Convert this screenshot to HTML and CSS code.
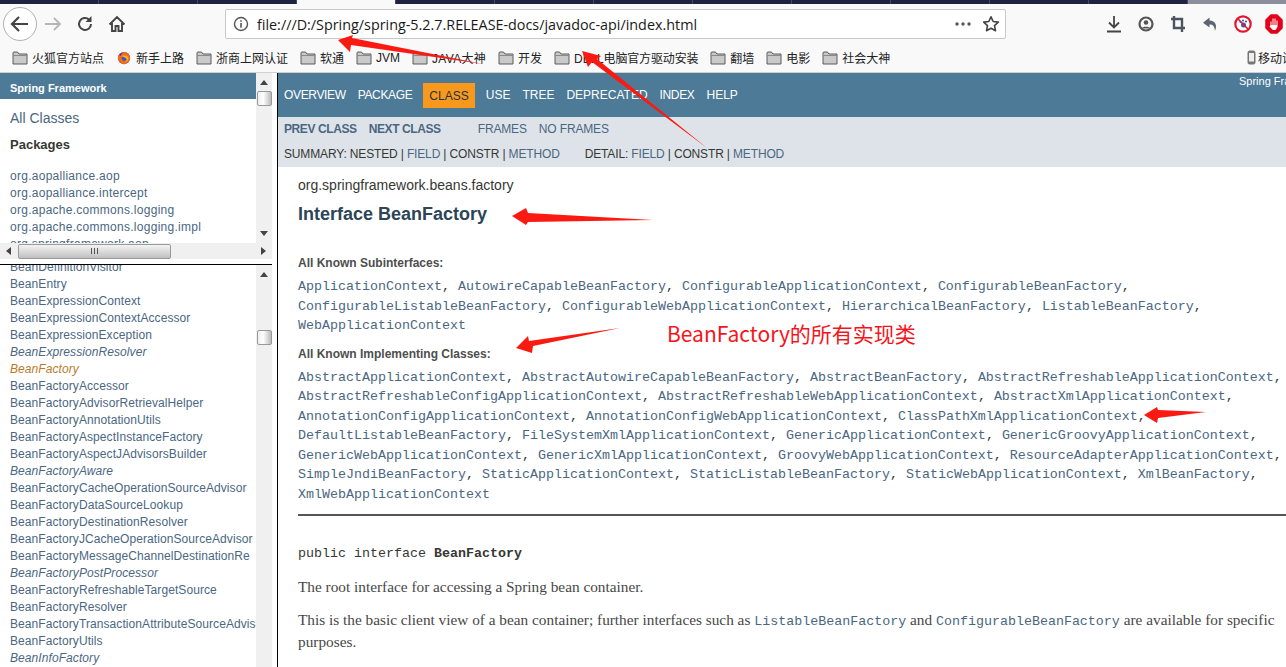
FILE: index.html
```html
<!DOCTYPE html>
<html lang="zh">
<head>
<meta charset="utf-8">
<title>BeanFactory</title>
<link rel="stylesheet" href="styles.css">
</head>
<body>
<div class="tabstrip">
  <i class="tab"></i><i class="tab"></i><i class="tab"></i><i class="tab active"></i><i class="tab"></i><i class="tab"></i><i class="tab"></i><i class="tab"></i><i class="tab"></i><i class="tab"></i><i class="tab"></i><i class="tab"></i><i class="tab last"></i>
</div>
<header class="toolbar">
  <div class="nav-buttons">
    <span class="btn-back"><svg width="22" height="22" viewBox="0 0 22 22"><path d="M19 11H4M10 4l-7 7 7 7" fill="none" stroke="#444" stroke-width="2.2"/></svg></span>
    <span class="btn"><svg width="18" height="18" viewBox="0 0 18 18"><path d="M1 9h15M10 3l6 6-6 6" fill="none" stroke="#b5b5b5" stroke-width="1.8"/></svg></span>
    <span class="btn"><svg width="18" height="18" viewBox="0 0 18 18"><path d="M15 9a6 6 0 1 1-2-4.500" fill="none" stroke="#444" stroke-width="2"/><path d="M15.500 1v6h-6z" fill="#444"/></svg></span>
    <span class="btn"><svg width="18" height="18" viewBox="0 0 18 18"><path d="M1.500 9.500 9 2l7.500 7.500M4 8v8h3.500v-5h3v5H14V8" fill="none" stroke="#444" stroke-width="1.900"/></svg></span>
  </div>
  <div class="urlbar">
    <svg class="info" width="16" height="16" viewBox="0 0 16 16"><circle cx="8" cy="8" r="6.500" fill="none" stroke="#555" stroke-width="1.400"/><path d="M7.200 7h1.600v4.800H7.200zM7.200 4.200h1.600v1.600H7.200z" fill="#555"/></svg>
    <span class="url">file:///D:/Spring/spring-5.2.7.RELEASE-docs/javadoc-api/index.html</span>
    <svg class="more" width="18" height="6" viewBox="0 0 18 6"><circle cx="3" cy="3" r="1.700" fill="#555"/><circle cx="9" cy="3" r="1.700" fill="#555"/><circle cx="15" cy="3" r="1.700" fill="#555"/></svg>
    <svg class="star" width="18" height="18" viewBox="0 0 18 18"><path d="M9 1.800l2.200 4.700 5.100.6-3.800 3.500 1 5.100L9 13.200l-4.500 2.500 1-5.100-3.800-3.500 5.100-.6z" fill="none" stroke="#444" stroke-width="1.600" stroke-linejoin="round"/></svg>
  </div>
  <div class="tools">
    <svg width="16" height="18" viewBox="0 0 16 18"><path d="M8 1v11M3 7.500l5 5 5-5M1 16.500h14" fill="none" stroke="#444" stroke-width="1.800"/></svg>
    <svg width="16" height="16" viewBox="0 0 16 16"><circle cx="8" cy="8" r="6.500" fill="none" stroke="#555" stroke-width="2.200"/><circle cx="8" cy="6.500" r="2.300" fill="#555"/><path d="M3.500 12.500c1-2.500 8-2.500 9 0z" fill="#555"/></svg>
    <svg width="16" height="18" viewBox="0 0 16 18"><path d="M4 1v12h11M1 4h11v13" fill="none" stroke="#4a5560" stroke-width="2.400"/></svg>
    <svg width="16" height="16" viewBox="0 0 16 16"><path d="M7.500 1.500L1 6.800l6.500 4.700V8.500c3 0 5 1 5.500 6.500 2.500-6 .5-10-5.500-10.500z" fill="#5b6670"/></svg>
    <svg width="18" height="18" viewBox="0 0 18 18"><circle cx="9" cy="9" r="7.700" fill="#fff" stroke="#e0182d" stroke-width="2.200"/><circle cx="9.500" cy="10" r="2.500" fill="#2f5fc4"/><circle cx="6.500" cy="7" r="1.100" fill="#2f5fc4"/><circle cx="9" cy="5.500" r="1.100" fill="#2f5fc4"/><circle cx="12" cy="6.500" r="1.100" fill="#2f5fc4"/><path d="M3.800 3.800l10.400 10.400" stroke="#e0182d" stroke-width="1.600"/></svg>
    <svg class="stop" width="18" height="20" viewBox="0 0 18 20"><path d="M6 1h6l5 5v8l-5 5H6l-5-5V6z" fill="#e2001a" stroke="#e2001a" stroke-linejoin="round" stroke-width="1.500"/><path d="M5.500 11V7.500h1V11h1V4.500h1V11h1V4.500h1V11h1V6.500h1V13l-2 3H8l-3.500-3.500z" fill="#fff"/></svg>
  </div>
</header>
<nav class="bookmarks">
  <span class="bm"><svg class="folder" viewBox="0 0 16 14"><path d="M1 13V2q0-1 1-1h3.500l1.500 2h8v10z" fill="#c9c9c9" stroke="#5c5c5c"/><path d="M1 4.500h14" stroke="#8a8a8a"/></svg>火狐官方站点</span>
  <span class="bm"><svg class="folder" viewBox="0 0 16 16"><circle cx="8" cy="8" r="7" fill="#5b2a9c"/><path d="M8 1a7 7 0 1 1-7 7c0-2 .7-3 1.500-4 .3 1 .8 1.500 1.500 1.700C5 3 6.500 1.500 8 1z" fill="#f26a1b"/><circle cx="8.500" cy="8" r="3" fill="#3458c4"/><path d="M5 6c3-2 7-1 8 2 0 3-2 5-4 5 2-1 2.500-3 1.500-4.500C9 7 7 7 5 6z" fill="#f9b21a"/></svg>新手上路</span>
  <span class="bm"><svg class="folder" viewBox="0 0 16 14"><path d="M1 13V2q0-1 1-1h3.500l1.500 2h8v10z" fill="#c9c9c9" stroke="#5c5c5c"/><path d="M1 4.500h14" stroke="#8a8a8a"/></svg>浙商上网认证</span>
  <span class="bm"><svg class="folder" viewBox="0 0 16 14"><path d="M1 13V2q0-1 1-1h3.500l1.500 2h8v10z" fill="#c9c9c9" stroke="#5c5c5c"/><path d="M1 4.500h14" stroke="#8a8a8a"/></svg>软通</span>
  <span class="bm"><svg class="folder" viewBox="0 0 16 14"><path d="M1 13V2q0-1 1-1h3.500l1.500 2h8v10z" fill="#c9c9c9" stroke="#5c5c5c"/><path d="M1 4.500h14" stroke="#8a8a8a"/></svg>JVM</span>
  <span class="bm bm-wide"><svg class="folder" viewBox="0 0 16 14"><path d="M1 13V2q0-1 1-1h3.500l1.500 2h8v10z" fill="#c9c9c9" stroke="#5c5c5c"/><path d="M1 4.500h14" stroke="#8a8a8a"/></svg>JAVA大神</span>
  <span class="bm"><svg class="folder" viewBox="0 0 16 14"><path d="M1 13V2q0-1 1-1h3.500l1.500 2h8v10z" fill="#c9c9c9" stroke="#5c5c5c"/><path d="M1 4.500h14" stroke="#8a8a8a"/></svg>开发</span>
  <span class="bm bm-narrow"><svg class="folder" viewBox="0 0 16 14"><path d="M1 13V2q0-1 1-1h3.500l1.500 2h8v10z" fill="#c9c9c9" stroke="#5c5c5c"/><path d="M1 4.500h14" stroke="#8a8a8a"/></svg>DELL电脑官方驱动安装</span>
  <span class="bm"><svg class="folder" viewBox="0 0 16 14"><path d="M1 13V2q0-1 1-1h3.500l1.500 2h8v10z" fill="#c9c9c9" stroke="#5c5c5c"/><path d="M1 4.500h14" stroke="#8a8a8a"/></svg>翻墙</span>
  <span class="bm"><svg class="folder" viewBox="0 0 16 14"><path d="M1 13V2q0-1 1-1h3.500l1.500 2h8v10z" fill="#c9c9c9" stroke="#5c5c5c"/><path d="M1 4.500h14" stroke="#8a8a8a"/></svg>电影</span>
  <span class="bm"><svg class="folder" viewBox="0 0 16 14"><path d="M1 13V2q0-1 1-1h3.500l1.500 2h8v10z" fill="#c9c9c9" stroke="#5c5c5c"/><path d="M1 4.500h14" stroke="#8a8a8a"/></svg>社会大神</span>
  <span class="bm mobile"><svg class="phone" viewBox="0 0 9 15"><rect x="1" y="1" width="7" height="13" rx="1.500" fill="#777" stroke="#777"/><path d="M2 3h5v8.500H2z" fill="#eee"/></svg>移动设备</span>
</nav>
<main class="frames">
  <aside class="side">
    <section class="side-top">
      <div class="side-row">
        <div class="side-pane">
          <div class="brand">Spring Framework</div>
          <a class="all">All Classes</a>
          <h2 class="pk-title">Packages</h2>
          <ul class="pk-list">
            <li>org.aopalliance.aop</li>
            <li>org.aopalliance.intercept</li>
            <li>org.apache.commons.logging</li>
            <li>org.apache.commons.logging.impl</li>
            <li>org.springframework.aop</li>
          </ul>
        </div>
        <div class="vscroll">
          <svg class="arrow" viewBox="0 0 8 5"><path d="M4 0l4 5H0z" fill="#444"/></svg>
          <span class="thumb thumb-top"></span>
          <svg class="arrow arrow-end" viewBox="0 0 8 5"><path d="M4 5L8 0H0z" fill="#444"/></svg>
        </div>
      </div>
      <div class="hscroll">
        <svg class="arrow-h" viewBox="0 0 5 8"><path d="M0 4l5-4v8z" fill="#444"/></svg>
        <span class="hthumb"><i></i></span>
        <svg class="arrow-h arrow-end-h" viewBox="0 0 5 8"><path d="M5 4L0 0v8z" fill="#444"/></svg>
      </div>
    </section>
    <section class="side-bottom">
      <ul class="class-list">
        <li class="first">BeanDefinitionVisitor</li>
        <li>BeanEntry</li>
        <li>BeanExpressionContext</li>
        <li>BeanExpressionContextAccessor</li>
        <li>BeanExpressionException</li>
        <li class="it">BeanExpressionResolver</li>
        <li class="it cur">BeanFactory</li>
        <li>BeanFactoryAccessor</li>
        <li>BeanFactoryAdvisorRetrievalHelper</li>
        <li>BeanFactoryAnnotationUtils</li>
        <li>BeanFactoryAspectInstanceFactory</li>
        <li>BeanFactoryAspectJAdvisorsBuilder</li>
        <li class="it">BeanFactoryAware</li>
        <li>BeanFactoryCacheOperationSourceAdvisor</li>
        <li>BeanFactoryDataSourceLookup</li>
        <li>BeanFactoryDestinationResolver</li>
        <li>BeanFactoryJCacheOperationSourceAdvisor</li>
        <li>BeanFactoryMessageChannelDestinationRe</li>
        <li class="it">BeanFactoryPostProcessor</li>
        <li>BeanFactoryRefreshableTargetSource</li>
        <li>BeanFactoryResolver</li>
        <li>BeanFactoryTransactionAttributeSourceAdvis</li>
        <li>BeanFactoryUtils</li>
        <li class="it">BeanInfoFactory</li>
      </ul>
      <div class="vscroll">
        <svg class="arrow arrow-low" viewBox="0 0 8 5"><path d="M4 0l4 5H0z" fill="#444"/></svg>
        <span class="thumb thumb-low"></span>
      </div>
    </section>
  </aside>
  <article class="content">
    <div class="topnav">
      <a class="snug">OVERVIEW</a><a class="snug">PACKAGE</a><a class="on">CLASS</a><a>USE</a><a>TREE</a><a>DEPRECATED</a><a class="snug">INDEX</a><a>HELP</a>
      <span class="about">Spring Framework</span>
    </div>
    <div class="subnav">
      <div class="subrow">
        <a class="b">PREV CLASS</a><a class="b">NEXT CLASS</a><a class="frames-link">FRAMES</a><a>NO FRAMES</a>
      </div>
      <div class="subrow tight">
        <span>SUMMARY: NESTED | <a>FIELD</a> | CONSTR | <a>METHOD</a></span>
        <span class="detail">DETAIL: <a>FIELD</a> | CONSTR | <a>METHOD</a></span>
      </div>
    </div>
    <div class="body">
      <div class="pkg">org.springframework.beans.factory</div>
      <h1 class="title">Interface BeanFactory</h1>
      <h3 class="label label-sub">All Known Subinterfaces:</h3>
      <div class="mono">
        <div><a>ApplicationContext</a>, <a>AutowireCapableBeanFactory</a>, <a>ConfigurableApplicationContext</a>, <a>ConfigurableBeanFactory</a>,</div>
        <div><a>ConfigurableListableBeanFactory</a>, <a>ConfigurableWebApplicationContext</a>, <a>HierarchicalBeanFactory</a>, <a>ListableBeanFactory</a>,</div>
        <div><a>WebApplicationContext</a></div>
      </div>
      <h3 class="label label-impl">All Known Implementing Classes:</h3>
      <div class="mono">
        <div><a>AbstractApplicationContext</a>, <a>AbstractAutowireCapableBeanFactory</a>, <a>AbstractBeanFactory</a>, <a>AbstractRefreshableApplicationContext</a>,</div>
        <div><a>AbstractRefreshableConfigApplicationContext</a>, <a>AbstractRefreshableWebApplicationContext</a>, <a>AbstractXmlApplicationContext</a>,</div>
        <div><a>AnnotationConfigApplicationContext</a>, <a>AnnotationConfigWebApplicationContext</a>, <a>ClassPathXmlApplicationContext</a>,</div>
        <div><a>DefaultListableBeanFactory</a>, <a>FileSystemXmlApplicationContext</a>, <a>GenericApplicationContext</a>, <a>GenericGroovyApplicationContext</a>,</div>
        <div><a>GenericWebApplicationContext</a>, <a>GenericXmlApplicationContext</a>, <a>GroovyWebApplicationContext</a>, <a>ResourceAdapterApplicationContext</a>,</div>
        <div><a>SimpleJndiBeanFactory</a>, <a>StaticApplicationContext</a>, <a>StaticListableBeanFactory</a>, <a>StaticWebApplicationContext</a>, <a>XmlBeanFactory</a>,</div>
        <div><a>XmlWebApplicationContext</a></div>
      </div>
      <hr class="rule">
      <pre class="sig">public interface <b>BeanFactory</b></pre>
      <p class="para first-para">The root interface for accessing a Spring bean container.</p>
      <p class="para">This is the basic client view of a bean container; further interfaces such as <code>ListableBeanFactory</code> and <code>ConfigurableBeanFactory</code> are available for specific<br>purposes.</p>
    </div>
  </article>
</main>
<div class="note">BeanFactory的所有实现类</div>
<svg class="arrows" width="1286" height="667" viewBox="0 0 1286 667">
  <g fill="#fb1a12">
    <path d="M338 40L353 35L352 38L483 64L351 45L350 52z"/>
    <path d="M582 51L601 56L597 59L707 148L592 62L588 67z"/>
    <path d="M512 216L526 208L528 213L653 220L528 222L526 225z"/>
    <path d="M516 348L528 336L529 341L620 328L533 346L532 353z"/>
    <path d="M1144 415L1157 407L1158 410L1206 412L1158 418L1157 423z"/>
  </g>
</svg>
</body>
</html>
```

FILE: styles.css
```css
* { box-sizing: border-box; }
html, body { margin: 0; height: 667px; overflow: hidden; background: #fff; }
body { display: flex; flex-direction: column; width: 1286px; position: relative; font-family: "Liberation Sans", "Noto Sans CJK SC", sans-serif; }
a { color: inherit; text-decoration: none; }

.tabstrip { display: flex; gap: 1px; height: 4px; background: #444a66; flex: none; }
.tab { display: block; flex: none; width: 98px; background: #1e2342; }
.tab.active { background: #f9f9fa; }
.tab.last { flex: 1; background: #8c8f9b; }

.toolbar { display: flex; align-items: center; height: 44px; flex: none; background: #f9f9fa; padding: 0 0 4px 3px; }
.nav-buttons { display: flex; align-items: center; width: 222px; flex: none; }
.btn-back { display: flex; align-items: center; justify-content: center; width: 34px; height: 34px; border: 1px solid #b1b1b3; border-radius: 50%; background: #fff; }
.btn { display: flex; align-items: center; justify-content: center; width: 32px; }
.urlbar { display: flex; align-items: center; width: 781px; height: 30px; flex: none; background: #fff; border: 1px solid #c8c8ca; border-radius: 2px; padding: 0 5px 0 7px; }
.url { margin-left: 8px; font-family: "Open Sans", "Noto Sans", sans-serif; font-size: 14.35px; color: #1a1a1a; white-space: nowrap; flex: 1; }
.more { margin-right: 10px; }
.tools { display: flex; align-items: center; gap: 16px; margin-left: 100px; flex: none; }
.stop { margin-left: -3px; }

.bookmarks { display: flex; align-items: center; gap: 12px; height: 25px; flex: none; padding: 0 0 5px 12px; background: #f9f9fa; border-bottom: 1px solid #d0d0d2; font-size: 12px; color: #222; white-space: nowrap; }
.bm { display: flex; align-items: center; gap: 4px; }
.bm-wide { letter-spacing: 0.3px; }
.bm-narrow { letter-spacing: -0.15px; }
.folder { width: 16px; height: 14px; }
.phone { width: 9px; height: 15px; }
.mobile { gap: 2px; margin-left: auto; margin-right: -20px; }

.frames { display: flex; flex: 1; min-height: 0; }
.side { width: 277px; flex: none; display: flex; flex-direction: column; background: #fff; }
.side-top { height: 192px; flex: none; width: 272px; border-bottom: 1px solid #000; padding-bottom: 5px; display: flex; flex-direction: column; }
.side-row { display: flex; height: 170px; flex: none; }
.side-pane { flex: 1; min-width: 0; overflow: hidden; color: #4a6782; }
.brand { height: 26px; line-height: 30px; padding-left: 10px; background: #4d7a97; color: #fff; font-size: 11px; font-weight: bold; }
.all { display: block; margin: 10px 0 0 10px; font-size: 14px; line-height: 18px; }
.pk-title { margin: 9px 0 0 10px; font-size: 13px; line-height: 18px; color: #353833; }
.pk-list { list-style: none; margin: 14px 0 0 10px; padding: 0; font-size: 12px; line-height: 17px; letter-spacing: 0.27px; }

.vscroll { width: 16px; flex: none; background: #f0f0f0; display: flex; flex-direction: column; align-items: center; }
.arrow { width: 8px; height: 5px; margin-top: 7px; flex: none; }
.arrow-end { margin-top: auto; margin-bottom: 7px; }
.arrow-low { margin-top: 7px; }
.thumb { display: block; width: 15px; height: 15px; border: 1px solid #999; border-radius: 2px; background: linear-gradient(90deg, #eee, #fff 40%, #bbb); flex: none; }
.thumb-top { margin-top: 6px; }
.thumb-low { margin-top: 53px; }

.hscroll { display: flex; align-items: center; height: 16px; flex: none; background: #f0f0f0; }
.arrow-h { width: 5px; height: 8px; margin-left: 6px; flex: none; }
.arrow-end-h { margin-left: auto; margin-right: 6px; }
.hthumb { display: flex; align-items: center; justify-content: center; width: 153px; height: 15px; margin-left: 7px; border: 1px solid #999; border-radius: 2px; background: linear-gradient(180deg, #f4f4f4, #c0c0c0); }
.hthumb i { display: block; width: 7px; height: 6px; background: repeating-linear-gradient(90deg, #555 0 1px, transparent 1px 3px); }

.side-bottom { flex: 1; min-height: 0; width: 272px; display: flex; overflow: hidden; }
.class-list { flex: 1; min-width: 0; list-style: none; margin: 0; padding: 0 0 0 10px; overflow: hidden; font-size: 12px; line-height: 17px; letter-spacing: 0.08px; color: #4a6782; white-space: nowrap; }
.class-list .first { margin-top: -6px; }
.it { font-style: italic; }
.cur { color: #bb7a2a; }

.content { flex: 1; min-width: 0; border-left: 1px solid #000; overflow: hidden; color: #353833; }
.topnav { display: flex; align-items: center; gap: 12px; height: 44px; padding-left: 6px; background: #4d7a97; color: #fff; font-size: 12px; white-space: nowrap; }
.topnav .snug { letter-spacing: -0.35px; }
.topnav .on { margin: 0 -1px; padding: 6px 6px 5px; background: #f8981d; color: #253441; }
.about { margin-left: auto; width: 47px; overflow: hidden; align-self: flex-start; margin-top: 2px; font-size: 11px; line-height: 13px; }
.subnav { height: 50px; padding: 0 0 0 6px; background: #dee3e9; font-size: 12px; letter-spacing: -0.15px; white-space: nowrap; }
.subrow { display: flex; height: 25px; align-items: center; gap: 12px; padding-bottom: 2px; }
.subrow a { color: #4a6782; }
.subrow .b { font-weight: bold; letter-spacing: -0.4px; }
.frames-link { margin-left: 25px; }
.tight span { display: block; }
.detail { margin-left: 13px; }

.body { padding: 8px 0 0 20px; white-space: nowrap; }
.pkg { font-size: 14px; line-height: 20px; }
.title { margin: 7px 0 0; font-size: 18px; line-height: 24px; color: #2c4557; }
.label { margin: 0; font-size: 12px; line-height: 16px; color: #4e4e4e; }
.label-sub { margin-top: 29px; }
.label-impl { margin-top: 10px; }
.mono { margin-top: 6px; font-family: "Liberation Mono", monospace; font-size: 13.33px; line-height: 19.5px; color: #353833; }
.mono a { color: #4a6782; }
.rule { margin: 9.5px 0 0; height: 2px; border: 0; background: #555; }
.sig { margin: 28px 0 0; font-family: "Liberation Mono", monospace; font-size: 13.33px; line-height: 20px; }
.para { margin: 13px 0 0; font-family: "Liberation Serif", serif; font-size: 15.3px; line-height: 20px; color: #474747; }
.first-para { margin-top: 13px; }
code { font-family: "Liberation Mono", monospace; font-size: 13.33px; color: #4a6782; }

.note { position: absolute; left: 667px; top: 318px; font-family: "Noto Sans CJK SC", sans-serif; font-size: 21px; line-height: 30px; color: #f5141c; white-space: nowrap; }
.arrows { position: absolute; left: 0; top: 0; pointer-events: none; }
```
